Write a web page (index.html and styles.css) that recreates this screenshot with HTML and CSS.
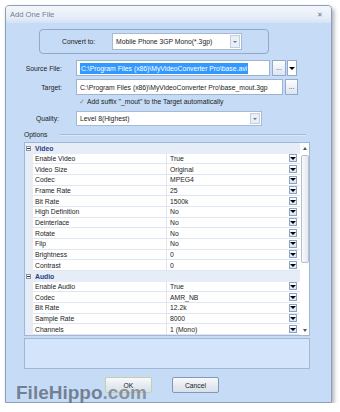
FILE: index.html
```html
<!DOCTYPE html>
<html lang="en">
<head>
  <meta charset="UTF-8">
  <title>Add One File</title>
  <link rel="stylesheet" href="styles.css">
</head>
<body>
  <div class="window">
    <div class="title-bar">
      <span class="title">Add One File</span>
      <span class="close">✕</span>
    </div>

    <div class="convert-group">
      <span class="convert-label">Convert to:</span>
      <div class="combo convert-combo">
        <span class="combo-text">Mobile Phone 3GP Mono(*.3gp)</span>
        <span class="combo-arrow"></span>
      </div>
    </div>

    <div class="form-row source-row">
      <label>Source File:</label>
      <div class="text-box source-box"><span class="selected">C:\Program Files (x86)\MyVideoConverter Pro\base.avi</span></div>
      <button class="dots-button">...</button>
      <button class="drop-button"></button>
    </div>

    <div class="form-row target-row">
      <label>Target:</label>
      <div class="text-box target-box">C:\Program Files (x86)\MyVideoConverter Pro\base_mout.3gp</div>
      <button class="dots-button">...</button>
    </div>

    <div class="check-row">
      <span class="check">✓</span>
      <span>Add suffix "_mout" to the Target automatically</span>
    </div>

    <div class="form-row quality-row">
      <label>Quality:</label>
      <div class="combo quality-combo">
        <span class="combo-text">Level 8(Highest)</span>
        <span class="combo-arrow"></span>
      </div>
    </div>

    <div class="options-row">
      <span>Options</span>
      <span class="options-line"></span>
    </div>

    <div class="prop-grid">
      <div class="prop-list">
        <div class="prop-category"><span class="toggle"></span><span>Video</span></div>
        <div class="prop-row"><span class="prop-name">Enable Video</span><span class="prop-value">True<span class="value-drop"></span></span></div>
        <div class="prop-row"><span class="prop-name">Video Size</span><span class="prop-value">Original<span class="value-drop"></span></span></div>
        <div class="prop-row"><span class="prop-name">Codec</span><span class="prop-value">MPEG4<span class="value-drop"></span></span></div>
        <div class="prop-row"><span class="prop-name">Frame Rate</span><span class="prop-value">25<span class="value-drop"></span></span></div>
        <div class="prop-row"><span class="prop-name">Bit Rate</span><span class="prop-value">1500k<span class="value-drop"></span></span></div>
        <div class="prop-row"><span class="prop-name">High Definition</span><span class="prop-value">No<span class="value-drop"></span></span></div>
        <div class="prop-row"><span class="prop-name">Deinterlace</span><span class="prop-value">No<span class="value-drop"></span></span></div>
        <div class="prop-row"><span class="prop-name">Rotate</span><span class="prop-value">No<span class="value-drop"></span></span></div>
        <div class="prop-row"><span class="prop-name">Flip</span><span class="prop-value">No<span class="value-drop"></span></span></div>
        <div class="prop-row"><span class="prop-name">Brightness</span><span class="prop-value">0<span class="value-drop"></span></span></div>
        <div class="prop-row"><span class="prop-name">Contrast</span><span class="prop-value">0<span class="value-drop"></span></span></div>
        <div class="prop-category"><span class="toggle"></span><span>Audio</span></div>
        <div class="prop-row"><span class="prop-name">Enable Audio</span><span class="prop-value">True<span class="value-drop"></span></span></div>
        <div class="prop-row"><span class="prop-name">Codec</span><span class="prop-value">AMR_NB<span class="value-drop"></span></span></div>
        <div class="prop-row"><span class="prop-name">Bit Rate</span><span class="prop-value">12.2k<span class="value-drop"></span></span></div>
        <div class="prop-row"><span class="prop-name">Sample Rate</span><span class="prop-value">8000<span class="value-drop"></span></span></div>
        <div class="prop-row"><span class="prop-name">Channels</span><span class="prop-value">1 (Mono)<span class="value-drop"></span></span></div>
      </div>
      <div class="scrollbar">
        <span class="scroll-up"></span>
        <span class="scroll-thumb"></span>
        <span class="scroll-down"></span>
      </div>
    </div>

    <div class="description"></div>

    <div class="button-row">
      <button class="dialog-button ok-button">OK</button>
      <button class="dialog-button">Cancel</button>
    </div>
  </div>

  <div class="watermark">FileHippo<span class="dotcom">.com</span></div>
</body>
</html>
```

FILE: styles.css
```css
body {
  margin: 0;
  background: #ffffff;
  font-family: "Liberation Sans", Arial, sans-serif;
  font-size: 6.8px;
  color: #1b1b1b;
}

.window {
  position: relative;
  margin: 5px 0 0 5px;
  width: 325px;
  height: 396px;
  border: 1px solid #8c9fb9;
  border-radius: 4px 4px 0 0;
  background: #c6dbf6;
  box-shadow: 2px 3px 4px rgba(60, 70, 90, 0.45);
}

.title-bar {
  height: 17px;
  display: flex;
  align-items: center;
  justify-content: space-between;
  padding: 0 8px 0 4px;
  border-radius: 3px 3px 0 0;
  background: linear-gradient(#f4f7fb, #e6edf7 70%, #d3e2f6);
  color: #707f93;
  font-size: 7.6px;
}

.close {
  font-size: 6.5px;
  color: #66768b;
}

/* convert to */
.convert-group {
  box-sizing: border-box;
  margin: 6px 0 0 33px;
  width: 230px;
  height: 25px;
  border: 1px solid #90aacd;
  border-radius: 4px;
  display: flex;
  align-items: center;
  padding-left: 22px;
}

.convert-label {
  width: 50px;
}

.combo {
  box-sizing: border-box;
  height: 16px;
  display: flex;
  align-items: center;
  border: 1px solid #a8bad3;
  background: #ffffff;
  padding-left: 3px;
}

.convert-combo {
  width: 130px;
  height: 17px;
}

.quality-combo {
  width: 186px;
  height: 15px;
}

.combo-text {
  flex: 1;
  white-space: nowrap;
}

.combo-arrow {
  box-sizing: border-box;
  width: 10px;
  height: calc(100% - 2px);
  margin-right: 1px;
  border: 1px solid #c3cfe0;
  background: #e9eff7;
  display: flex;
  align-items: center;
  justify-content: center;
}

.combo-arrow::after {
  content: "";
  border-left: 2px solid transparent;
  border-right: 2px solid transparent;
  border-top: 2px solid #6a7482;
}

/* file rows */
.form-row {
  display: flex;
  align-items: center;
  height: 16px;
}

.form-row label {
  width: 56px;
  margin-right: 14px;
  text-align: right;
}

.source-row {
  margin-top: 6px;
}

.target-row {
  margin-top: 3px;
}

.quality-row {
  margin-top: 5px;
  height: 15px;
}

.quality-row label {
  width: 53px;
  margin-right: 17px;
}

.text-box {
  box-sizing: border-box;
  height: 16px;
  display: flex;
  align-items: center;
  padding-left: 3px;
  border: 1px solid #9fb3cf;
  background: #ffffff;
  white-space: nowrap;
  overflow: hidden;
}

.source-box {
  width: 194px;
}

.target-box {
  width: 207px;
}

.selected {
  background: #3399ff;
  color: #ffffff;
  line-height: 11px;
  padding: 0 1px;
}

.dots-button, .drop-button {
  box-sizing: border-box;
  height: 16px;
  padding: 0;
  border: 1px solid #93a9ca;
  font-family: inherit;
  font-size: 6.8px;
  color: #333333;
  background: linear-gradient(#fdfeff, #dbe5f2);
}

.dots-button {
  width: 14px;
  margin-left: 2px;
  line-height: 14px;
}

.target-row .dots-button {
  width: 13px;
}

.drop-button {
  width: 10px;
  margin-left: 1px;
  background: #ffffff;
  display: flex;
  align-items: center;
  justify-content: center;
}

.drop-button::after, .value-drop::after {
  content: "";
  border-left: 3px solid transparent;
  border-right: 3px solid transparent;
  border-top: 3px solid #000000;
}

.check-row {
  margin-top: 2px;
  height: 9px;
  display: flex;
  align-items: center;
  padding-left: 73px;
}

.check {
  color: #7c8796;
  margin-right: 2px;
}

/* options */
.options-row {
  margin-top: 4px;
  height: 9px;
  display: flex;
  align-items: center;
  padding-left: 18px;
}

.options-line {
  flex: 1;
  height: 1px;
  margin: 0 25px 0 13px;
  background: #a6bbd8;
  border-bottom: 1px solid #dce8f8;
}

.prop-grid {
  box-sizing: border-box;
  margin: 3px 0 0 18px;
  width: 286px;
  height: 194px;
  border: 1px solid #a2b7d6;
  background: #ffffff;
  display: flex;
}

.prop-list {
  flex: 1;
  display: grid;
  grid-template-rows: repeat(18, 1fr);
  background: linear-gradient(to right, #e6edf7 8px, #ffffff 8px);
}

.prop-category {
  display: flex;
  align-items: center;
  padding-left: 1px;
  background: #e6edf7;
  font-weight: bold;
  color: #1f3f7c;
}

.toggle {
  box-sizing: border-box;
  width: 5px;
  height: 5px;
  margin-right: 4px;
  border: 1px solid #8493a8;
  background: #ffffff;
  display: flex;
  align-items: center;
  justify-content: center;
}

.toggle::after {
  content: "";
  width: 3px;
  height: 1px;
  background: #333333;
}

.prop-row {
  display: flex;
  padding-left: 8px;
}

.prop-name, .prop-value {
  display: flex;
  align-items: center;
  border-bottom: 1px solid #dfe6ef;
}

.prop-name {
  width: 131px;
  padding-left: 2px;
  border-right: 1px solid #dfe6ef;
}

.prop-value {
  flex: 1;
  justify-content: space-between;
  padding: 0 3px;
}

.value-drop {
  box-sizing: border-box;
  width: 8px;
  height: 8px;
  border: 1px solid #8aa4c8;
  background: linear-gradient(#fdfeff, #d9e4f2);
  display: flex;
  align-items: center;
  justify-content: center;
}

.scrollbar {
  width: 9px;
  display: flex;
  flex-direction: column;
  align-items: center;
}

.scroll-up, .scroll-down {
  height: 10px;
  display: flex;
  align-items: center;
}

.scroll-up::after {
  content: "";
  border-left: 2px solid transparent;
  border-right: 2px solid transparent;
  border-bottom: 3px solid #555555;
}

.scroll-down {
  margin-top: auto;
}

.scroll-down::after {
  content: "";
  border-left: 2px solid transparent;
  border-right: 2px solid transparent;
  border-top: 3px solid #555555;
}

.scroll-thumb {
  box-sizing: border-box;
  margin-top: 2px;
  width: 8px;
  height: 108px;
  border: 1px solid #b5c0cf;
  border-radius: 2px;
  background: linear-gradient(to right, #f8f9fb, #e3e8ef);
}

.description {
  box-sizing: border-box;
  margin: 2px 0 0 18px;
  width: 286px;
  height: 31px;
  border: 1px solid #a2b7d6;
  background: #d4e4fa;
}

.button-row {
  margin-top: 8px;
  padding-left: 99px;
  display: flex;
  gap: 20px;
}

.dialog-button {
  box-sizing: border-box;
  width: 47px;
  height: 16px;
  padding: 0;
  border: 1px solid #8098b9;
  border-radius: 2px;
  background: linear-gradient(#f8fafc, #e6ebf2 50%, #d8e0ea);
  font-family: inherit;
  font-size: 6.8px;
  color: #1b1b1b;
}

.ok-button {
  border-color: #c7cea6;
}

.watermark {
  position: absolute;
  left: 16px;
  top: 382px;
  font-size: 19px;
  font-weight: bold;
  color: rgba(100, 112, 130, 0.85);
}

.dotcom {
  color: rgba(118, 126, 138, 0.78);
}
```
